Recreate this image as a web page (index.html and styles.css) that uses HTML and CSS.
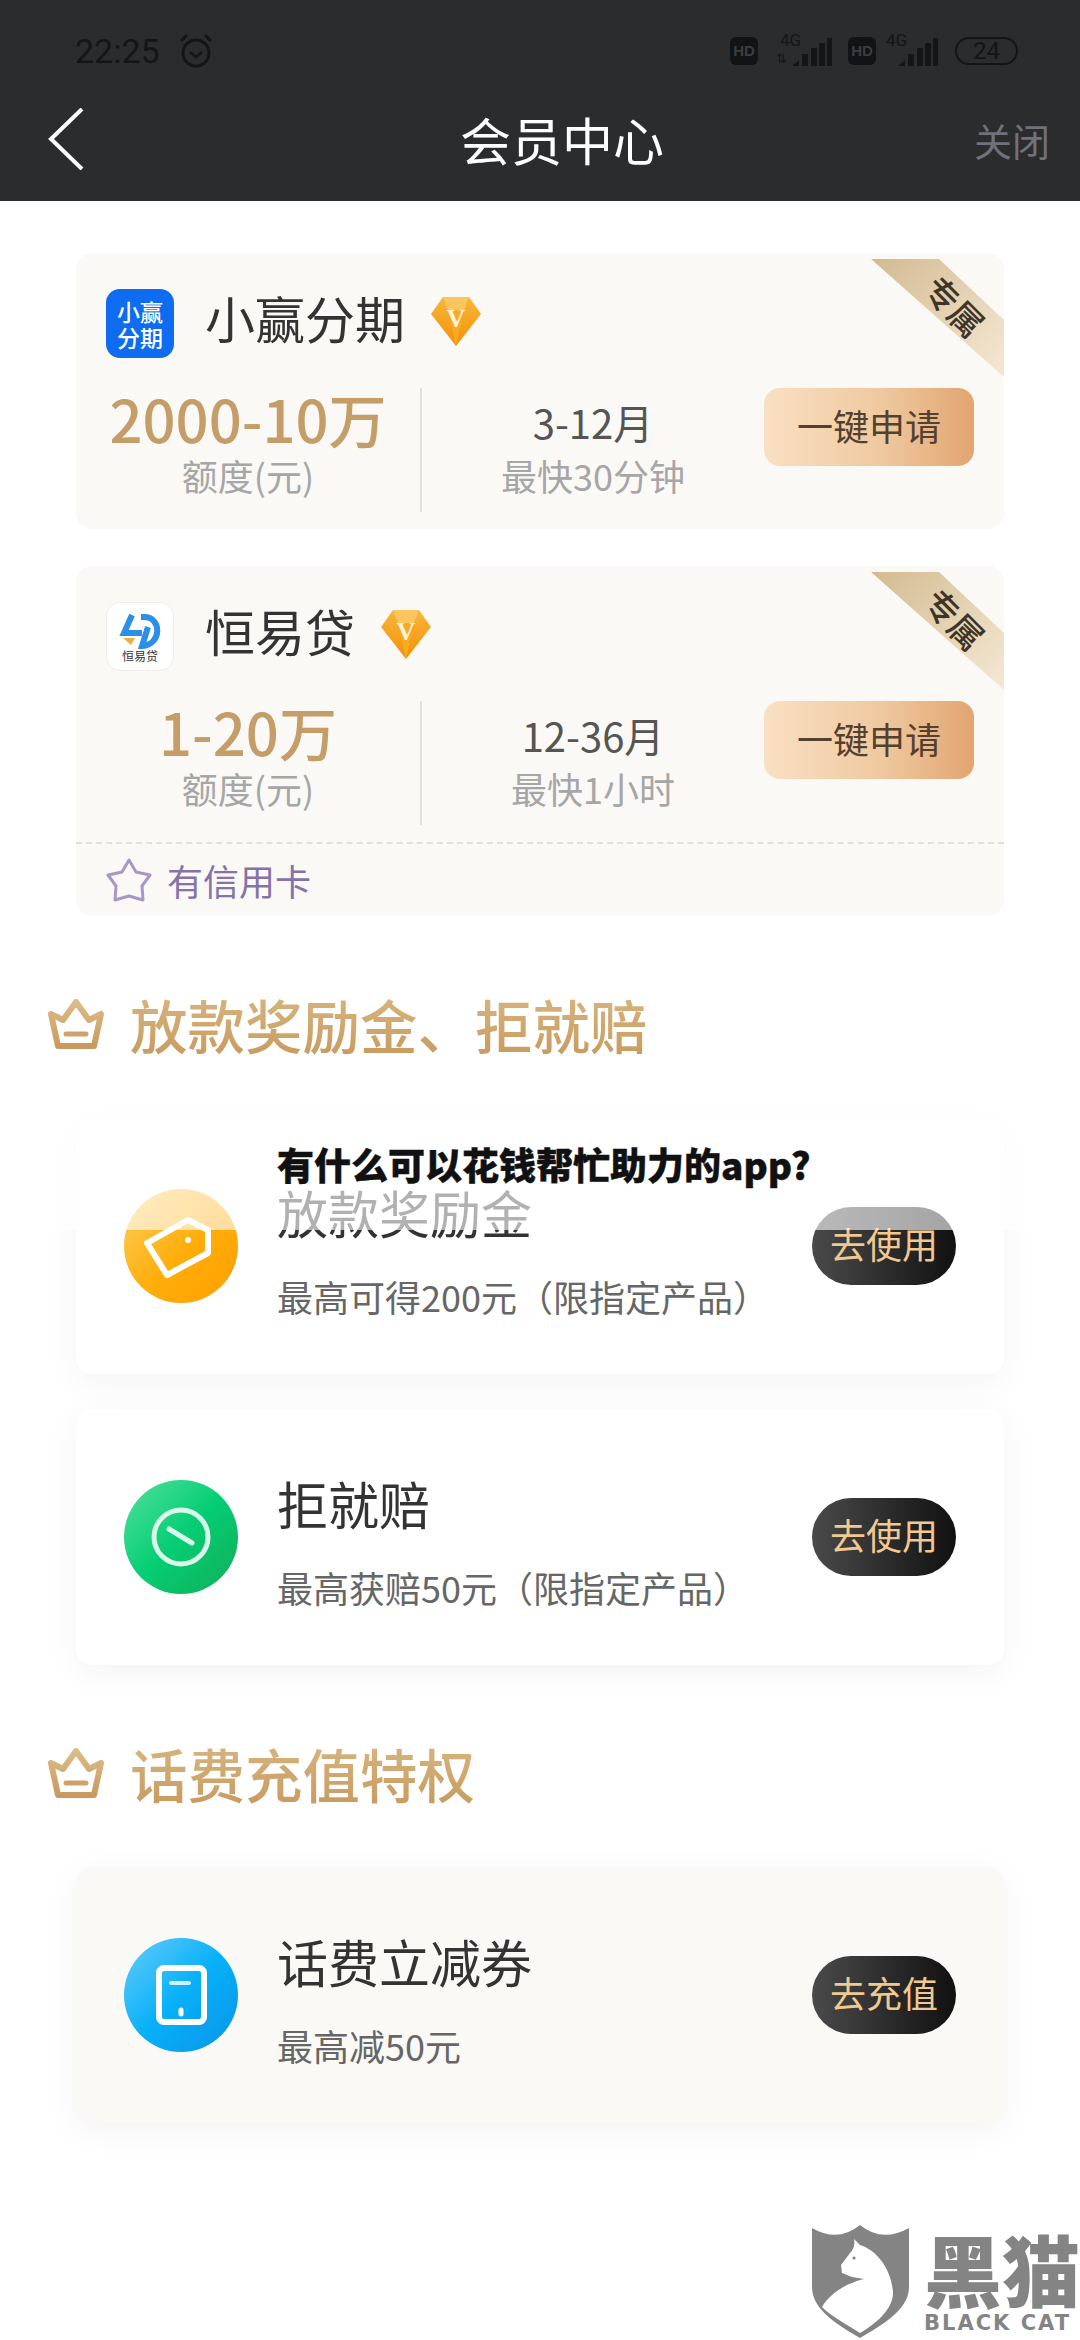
FILE: index.html
```html
<!DOCTYPE html>
<html lang="zh-CN">
<head>
    <meta charset="UTF-8">
    <meta name="viewport" content="width=device-width, initial-scale=1.0">
    <title>会员中心</title>
    <link rel="stylesheet" href="styles.css">
</head>
<body>
    <svg class="defs" width="0" height="0">
        <defs>
            <linearGradient id="crownGold" x1="0" y1="0" x2="0" y2="1">
                <stop offset="0" stop-color="#dcbc88"/>
                <stop offset="1" stop-color="#c99a5f"/>
            </linearGradient>
            <linearGradient id="gemOrange" x1="0" y1="0" x2="0" y2="1">
                <stop offset="0" stop-color="#f8b53c"/>
                <stop offset="1" stop-color="#f39206"/>
            </linearGradient>
            <symbol id="crown" viewBox="0 0 56 50">
                <path d="M3 15 L15 21 L28 3 L41 21 L53 15 L46 47 H10 Z" fill="none" stroke="url(#crownGold)" stroke-width="6" stroke-linejoin="round"/>
                <path d="M18 35 H38" stroke="#cda36b" stroke-width="5" stroke-linecap="round"/>
            </symbol>
            <symbol id="gem" viewBox="0 0 50 50">
                <polygon points="12,1 38,1 50,18 25,50 0,18" fill="url(#gemOrange)"/>
                <polygon points="12,1 38,1 33,14 17,14" fill="#fbc560"/>
                <polygon points="17,14 33,14 25,50" fill="#f8aa22"/>
                <text x="25" y="31" text-anchor="middle" class="gem-letter">V</text>
            </symbol>
            <symbol id="bars" viewBox="0 0 40 28">
                <polygon points="0,28 7,22 7,28" fill="#141516"/>
                <rect x="10" y="16" width="6" height="12" fill="#141516"/>
                <rect x="19" y="10" width="6" height="18" fill="#141516"/>
                <rect x="27" y="5" width="6" height="23" fill="#141516"/>
                <rect x="35" y="0" width="5" height="28" fill="#141516"/>
            </symbol>
        </defs>
    </svg>

    <div class="header">
        <div class="status-bar">
            <span class="clock">22:25</span>
            <svg class="alarm" viewBox="0 0 36 36" width="36" height="36">
                <circle cx="18" cy="20" r="13" fill="none" stroke="#141516" stroke-width="3"/>
                <path d="M12 19 L18 24 L24 19" fill="none" stroke="#141516" stroke-width="2.5"/>
                <path d="M3 8 L9 2 M33 8 L27 2" stroke="#141516" stroke-width="3"/>
            </svg>
            <div class="signals">
                <span class="hd">HD</span>
                <div class="sim sim-first">
                    <span class="net">4G</span>
                    <span class="updown">⇅</span>
                    <svg class="bars"><use href="#bars"/></svg>
                </div>
                <span class="hd">HD</span>
                <div class="sim">
                    <span class="net">4G</span>
                    <svg class="bars"><use href="#bars"/></svg>
                </div>
                <span class="battery">24</span>
            </div>
        </div>
        <div class="nav-bar">
            <svg class="back" viewBox="0 0 36 62" width="36" height="62">
                <path d="M34 1 L3 31 L34 61" fill="none" stroke="#fff" stroke-width="4"/>
            </svg>
            <h1>会员中心</h1>
            <span class="close">关闭</span>
        </div>
    </div>

    <div class="content">
        <div class="loan-card">
            <div class="ribbon"><span>专属</span></div>
            <div class="loan-top">
                <div class="app-logo logo-blue">
                    <span>小赢</span>
                    <span>分期</span>
                </div>
                <span class="loan-name">小赢分期</span>
                <svg class="gem"><use href="#gem"/></svg>
            </div>
            <div class="loan-row">
                <div class="loan-col">
                    <div class="amount">2000-10万</div>
                    <div class="muted">额度(元)</div>
                </div>
                <div class="loan-col term-col">
                    <div class="term">3-12月</div>
                    <div class="muted">最快30分钟</div>
                </div>
                <div class="apply">一键申请</div>
            </div>
        </div>

        <div class="loan-card">
            <div class="ribbon"><span>专属</span></div>
            <div class="loan-top">
                <div class="app-logo logo-white">
                    <svg viewBox="0 0 44 36" width="44" height="36">
                        <path d="M14 2 L6 20 H24 M23 4 H26 C44 4 44 32 24 33 L30 14" fill="none" stroke="#2b8fe8" stroke-width="6"/>
                        <path d="M5 25 H17 L13 32 Z" fill="#e8b04a"/>
                    </svg>
                    <span class="logo-caption">恒易贷</span>
                </div>
                <span class="loan-name">恒易贷</span>
                <svg class="gem"><use href="#gem"/></svg>
            </div>
            <div class="loan-row">
                <div class="loan-col">
                    <div class="amount">1-20万</div>
                    <div class="muted">额度(元)</div>
                </div>
                <div class="loan-col term-col">
                    <div class="term">12-36月</div>
                    <div class="muted">最快1小时</div>
                </div>
                <div class="apply">一键申请</div>
            </div>
            <div class="loan-foot">
                <svg viewBox="0 0 46 45" width="46" height="45">
                    <path d="M23 2 L30 14 L44 17 L36 28 L37 42 L23 38 L9 42 L10 28 L2 17 L16 14 Z" fill="none" stroke="#a896cb" stroke-width="3" stroke-linejoin="round"/>
                </svg>
                <span>有信用卡</span>
            </div>
        </div>

        <div class="section-head head-first">
            <svg class="crown"><use href="#crown"/></svg>
            <h2>放款奖励金、拒就赔</h2>
        </div>

        <div class="offer-card">
            <div class="offer-icon icon-orange">
                <svg viewBox="0 0 114 114" width="114" height="114">
                    <path d="M23 54 L43 86 L84 64 V41 L64 31 Z" fill="none" stroke="#fff" stroke-width="6" stroke-linejoin="round"/>
                    <circle cx="64" cy="51" r="3" fill="#fff"/>
                </svg>
            </div>
            <div class="offer-body">
                <div class="offer-title">放款奖励金</div>
                <div class="offer-sub">最高可得200元（限指定产品）</div>
            </div>
            <div class="offer-btn">去使用</div>
        </div>

        <div class="offer-card">
            <div class="offer-icon icon-green">
                <svg viewBox="0 0 114 114" width="114" height="114">
                    <circle cx="57" cy="57" r="27" fill="none" stroke="#fff" stroke-opacity="0.85" stroke-width="5"/>
                    <path d="M45 49 L68 63" stroke="#fff" stroke-opacity="0.85" stroke-width="5" stroke-linecap="round"/>
                </svg>
            </div>
            <div class="offer-body">
                <div class="offer-title">拒就赔</div>
                <div class="offer-sub">最高获赔50元（限指定产品）</div>
            </div>
            <div class="offer-btn">去使用</div>
        </div>

        <div class="section-head head-second">
            <svg class="crown"><use href="#crown"/></svg>
            <h2>话费充值特权</h2>
        </div>

        <div class="offer-card offer-tint">
            <div class="offer-icon icon-blue">
                <svg viewBox="0 0 114 114" width="114" height="114">
                    <rect x="35" y="30" width="45" height="54" rx="5" fill="none" stroke="#fff" stroke-width="6"/>
                    <path d="M47 45 H65" stroke="#fff" stroke-opacity="0.8" stroke-width="4" stroke-linecap="round"/>
                    <path d="M57 72 V76" stroke="#fff" stroke-width="5" stroke-linecap="round"/>
                </svg>
            </div>
            <div class="offer-body">
                <div class="offer-title">话费立减券</div>
                <div class="offer-sub">最高减50元</div>
            </div>
            <div class="offer-btn">去充值</div>
        </div>
    </div>

    <!-- headline strip across the first offer card -->
    <div class="headline-band">
        <span>有什么可以花钱帮忙助力的app?</span>
    </div>

    <!-- site stamp, bottom right -->
    <div class="stamp">
        <svg viewBox="0 0 97 113" width="97" height="113">
            <path d="M0 3 Q26 18 48 0 Q70 18 97 3 V62 C97 85 70 100 48 113 C26 100 0 85 0 62 Z" fill="#848484"/>
            <path d="M42 14 L48 20 C65 25 80 45 81 68 C81 85 62 100 48 108 C36 100 20 92 10 82 C18 68 35 58 52 54 L40 52 L30 48 L29 40 L38 28 C42 24 43 20 42 14 Z" fill="#fff"/>
            <circle cx="42" cy="33" r="1.6" fill="#848484"/>
        </svg>
        <div class="stamp-words">
            <span class="stamp-cn">黑猫</span>
            <span class="stamp-en">BLACK CAT</span>
        </div>
    </div>
</body>
</html>
```

FILE: styles.css
```css
* {
    box-sizing: border-box;
}

body {
    position: relative;
    width: 1080px;
    height: 2340px;
    margin: 0;
    overflow: hidden;
    background: #fff;
    font-family: "Noto Sans CJK SC", "Noto Sans", sans-serif;
    color: #333;
}

.defs {
    position: absolute;
}

/* header */
.header {
    height: 201px;
    padding: 33px 30px 8px 48px;
    background: #2b2c2e;
}

.status-bar {
    display: flex;
    align-items: center;
    height: 36px;
    margin-bottom: 19px;
    padding-left: 27px;
    color: #141516;
}

.clock {
    font-family: Roboto, sans-serif;
    font-size: 34px;
}

.alarm {
    margin-left: 18px;
}

.signals {
    display: flex;
    align-items: center;
    margin-left: auto;
    margin-right: 32px;
}

.hd {
    width: 28px;
    height: 28px;
    border-radius: 6px;
    background: #121314;
    color: #3d3e40;
    font-family: "Liberation Sans", sans-serif;
    font-size: 15px;
    font-weight: bold;
    line-height: 28px;
    text-align: center;
}

.sim {
    position: relative;
    width: 52px;
    height: 30px;
    margin: 0 17px 0 10px;
}

.sim-first {
    width: 56px;
    margin-left: 18px;
    margin-right: 16px;
}

.net {
    position: absolute;
    left: 0;
    top: -4px;
    font-family: Roboto, sans-serif;
    font-size: 17px;
    line-height: 16px;
}

.sim-first .net {
    left: 4px;
}

.updown {
    position: absolute;
    left: 0;
    bottom: 0;
    font-family: "DejaVu Sans", sans-serif;
    font-size: 13px;
    line-height: 14px;
}

.bars {
    position: absolute;
    right: 0;
    bottom: 0;
    width: 40px;
    height: 28px;
}

.battery {
    width: 63px;
    height: 28px;
    border: 2px solid #141516;
    border-radius: 14px;
    font-family: Roboto, sans-serif;
    font-size: 24px;
    line-height: 24px;
    text-align: center;
}

.nav-bar {
    display: flex;
    align-items: center;
    height: 102px;
}

h1 {
    margin: 0 0 0 376px;
    color: #fff;
    font-size: 51px;
    font-weight: 400;
    line-height: 70px;
}

.close {
    margin-left: auto;
    color: #6f717b;
    font-size: 38px;
}

/* loan product cards */
.content {
    padding: 52px 76px 0;
}

.loan-card {
    position: relative;
    margin-bottom: 37px;
    padding-top: 36px;
    overflow: hidden;
    border-radius: 16px;
    background: #fbf9f6;
}

.ribbon {
    position: absolute;
    top: 6px;
    right: 0;
    width: 133px;
    height: 118px;
    background: linear-gradient(135deg, #d2bb91 0%, #f5e8d4 100%);
    clip-path: polygon(0 0, 68px 0, 133px 61px, 133px 118px);
}

.ribbon span {
    position: absolute;
    left: 50px;
    top: 27px;
    color: #3f3527;
    font-size: 34px;
    font-weight: 500;
    line-height: 40px;
    transform: rotate(45deg);
}

.loan-top {
    display: flex;
    align-items: center;
    height: 69px;
    margin-bottom: 30px;
    padding-left: 30px;
}

.app-logo {
    display: flex;
    flex-direction: column;
    align-items: center;
    justify-content: center;
    flex: 0 0 68px;
    height: 69px;
    border-radius: 14px;
}

.logo-blue {
    background: #0d6cf0;
    color: #fff;
    font-size: 23px;
    font-weight: 500;
    line-height: 26px;
}

.logo-white {
    padding-top: 2px;
    border: 1px solid #efedea;
    background: #fff;
}

.logo-caption {
    color: #333;
    font-size: 12px;
    line-height: 14px;
}

.loan-name {
    margin: 0 26px 12px 31px;
    font-size: 50px;
    line-height: 69px;
}

.gem {
    width: 50px;
    height: 50px;
    margin-bottom: 6px;
}

.gem-letter {
    fill: #fff3dc;
    font-family: "Liberation Serif", serif;
    font-size: 26px;
    font-weight: bold;
}

.loan-row {
    display: flex;
    align-items: flex-start;
    height: 124px;
    margin-bottom: 17px;
    padding-right: 30px;
}

.loan-col {
    flex: 0 0 344px;
    height: 124px;
    text-align: center;
}

.term-col {
    flex: 1;
    border-left: 2px solid #e8e1d7;
}

.amount {
    height: 62px;
    color: #c59d68;
    font-size: 58px;
    font-weight: 500;
    line-height: 60px;
}

.term {
    height: 62px;
    padding-top: 3px;
    color: #555;
    font-size: 40px;
    line-height: 62px;
}

.muted {
    color: #a6a6a6;
    font-size: 36px;
    line-height: 50px;
}

.apply {
    flex: 0 0 210px;
    height: 78px;
    border-radius: 16px;
    background: linear-gradient(90deg, #f9e0c3 0%, #efc9a0 55%, #e2a570 100%);
    color: #54402f;
    font-size: 36px;
    line-height: 74px;
    text-align: center;
}

.loan-foot {
    display: flex;
    align-items: center;
    height: 74px;
    padding-left: 30px;
    border-top: 2px dashed #e2e0dd;
    color: #8572a8;
    font-size: 36px;
}

.loan-foot span {
    margin-left: 15px;
}

/* section headings */
.section-head {
    display: flex;
    align-items: center;
    height: 80px;
    margin-left: -28px;
}

.head-first {
    margin-top: 68px;
    margin-bottom: 54px;
}

.head-second {
    margin-top: 68px;
    margin-bottom: 54px;
}

.crown {
    width: 56px;
    height: 50px;
    margin-right: 26px;
}

h2 {
    margin: 0;
    background: linear-gradient(180deg, #d9b983 0%, #c7985c 100%);
    -webkit-background-clip: text;
    background-clip: text;
    color: transparent;
    font-size: 57.5px;
    font-weight: 500;
    line-height: 80px;
}

/* offer cards */
.offer-card {
    display: flex;
    align-items: center;
    height: 256px;
    margin-bottom: 35px;
    padding: 0 48px;
    border-radius: 16px;
    background: #fff;
    box-shadow: 0 8px 34px rgba(0,0,0,0.05);
}

.offer-tint {
    background: #fbf9f6;
}

.offer-icon {
    flex: 0 0 114px;
    height: 114px;
    border-radius: 50%;
}

.icon-orange {
    background: linear-gradient(135deg, #fdcf62 0%, #ffad0a 55%, #ff9f00 100%);
}

.icon-green {
    background: linear-gradient(135deg, #52e29e 0%, #05cd74 50%, #12ad56 100%);
}

.icon-blue {
    background: linear-gradient(135deg, #66cdfc 0%, #08b0f8 50%, #0a93e9 100%);
}

.offer-body {
    flex: 1;
    margin-left: 39px;
    padding-top: 6px;
}

.offer-title {
    margin-bottom: 24px;
    font-size: 51px;
    line-height: 70px;
}

.offer-sub {
    color: #666;
    font-size: 36px;
    line-height: 50px;
}

.offer-btn {
    flex: 0 0 144px;
    height: 78px;
    border-radius: 39px;
    background: linear-gradient(90deg, #4a4a4a 0%, #111 100%);
    color: #f1c88f;
    font-size: 36px;
    line-height: 72px;
    text-align: center;
}

/* overlays */
.headline-band {
    position: absolute;
    top: 1090px;
    left: 0;
    right: 0;
    height: 140px;
    padding: 52px 0 0 277px;
    background: rgba(255,255,255,0.62);
}

.headline-band span {
    color: #111;
    font-size: 37px;
    font-weight: 900;
    line-height: 44px;
    -webkit-text-stroke: 0.4px #111;
}

.stamp {
    position: absolute;
    left: 812px;
    top: 2225px;
    display: flex;
}

.stamp-words {
    display: flex;
    flex-direction: column;
    margin-left: 15px;
    color: #848484;
}

.stamp-cn {
    height: 86px;
    font-size: 78px;
    font-weight: 900;
    line-height: 86px;
    white-space: nowrap;
}

.stamp-en {
    font-family: "DejaVu Sans", sans-serif;
    font-size: 21px;
    font-weight: bold;
    letter-spacing: 2px;
    line-height: 24px;
    white-space: nowrap;
}
```
